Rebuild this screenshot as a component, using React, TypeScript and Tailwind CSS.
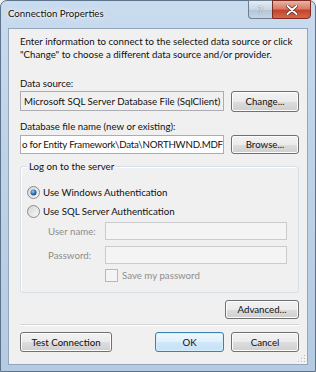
import React from "react";

const btn =
  "flex items-center justify-center whitespace-nowrap rounded-[3px] border border-[#707070] bg-[linear-gradient(#f2f2f2_0%,#ebebeb_50%,#dddddd_51%,#cfcfcf_100%)] shadow-[inset_0_0_0_1px_#fcfcfc] text-[#111]";

function Button({ label, className }: { label: string; className: string }) {
  return <div className={`${btn} ${className}`}>{label}</div>;
}

function Radio({ checked }: { checked?: boolean }) {
  return (
    <svg width="13" height="13" viewBox="0 0 13 13" className="shrink-0">
      <defs>
        <linearGradient id={checked ? "rg1" : "rg0"} x1="0" y1="0" x2="1" y2="1">
          <stop offset="0" stopColor="#cfcfcf" />
          <stop offset="1" stopColor="#ffffff" />
        </linearGradient>
        <radialGradient id="dot" cx="0.4" cy="0.35" r="0.7">
          <stop offset="0" stopColor="#8ad0f4" />
          <stop offset="0.6" stopColor="#2a6fb0" />
          <stop offset="1" stopColor="#14406e" />
        </radialGradient>
      </defs>
      <circle cx="6.5" cy="6.5" r="6" fill={`url(#${checked ? "rg1" : "rg0"})`} stroke="#8a8a8a" strokeWidth="1" />
      <circle cx="6.5" cy="6.5" r="4.3" fill="none" stroke="#e6e6e6" strokeWidth="0.8" />
      {checked && <circle cx="6.5" cy="6.5" r="3" fill="url(#dot)" />}
    </svg>
  );
}

export default function App() {
  return (
    <div className="w-[316px] h-[372px] overflow-hidden bg-[#f0f0f0] font-['Lato',sans-serif] text-[9.7px] leading-[13px] whitespace-nowrap">
      <div className="relative w-[316px] h-[372px] flex flex-col rounded-t-[7px] border border-[#5d738c] bg-[linear-gradient(180deg,#c9dbee_0%,#bfd3e8_40%,#b5cbe2_100%)]">
        {/* title bar */}
        <div className="h-[27px] shrink-0 flex items-start justify-between">
          <div className="pl-[7px] pt-[6px] leading-[13px] text-[#111] [text-shadow:0_0_6px_#fff,0_0_3px_#fff]">
            Connection Properties
          </div>
          <div className="flex mr-[4px] -mt-[1px]">
            <div className="w-[24px] h-[19px] flex items-center justify-center rounded-bl-[4px] border border-[#6f7f92] border-r-0 bg-[linear-gradient(#e5edf6_0%,#c7d5e4_50%,#b3c4d8_51%,#c5d5e6_100%)] text-[11px] font-bold text-[#eef3f8] [text-shadow:0_0_1px_#334]">
              ?
            </div>
            <div className="w-[39px] h-[19px] flex items-center justify-center rounded-br-[4px] border border-[#7b2b20] bg-[linear-gradient(#eab3a6_0%,#d97c68_45%,#c5432c_55%,#d5674b_100%)]">
              <svg width="12" height="10" viewBox="0 0 12 10">
                <path d="M1.5 1 L10.5 9 M10.5 1 L1.5 9" stroke="#3a1a14" strokeWidth="3.2" strokeLinecap="round" />
                <path d="M1.5 1 L10.5 9 M10.5 1 L1.5 9" stroke="#ffffff" strokeWidth="2" strokeLinecap="round" />
              </svg>
            </div>
          </div>
        </div>

        {/* client area */}
        <div className="relative mx-[7px] h-[337px] shrink-0 border border-[#93a6bc] bg-[#f0f0f0] pl-[11px] pr-[8px] pt-[6px] text-[#111]">
          <div>
            <div>Enter information to connect to the selected data source or click</div>
            <div>"Change" to choose a different data source and/or provider.</div>
          </div>

          <div className="mt-[16px]">Data source:</div>
          <div className="flex items-start gap-[7px] mt-[1px]">
            <div className="w-[204px] h-[20px] border border-[#abadb3] bg-[#f0f0f0] pl-[3px] leading-[18px] overflow-hidden">
              Microsoft SQL Server Database File (SqlClient)
            </div>
            <Button label="Change..." className="w-[68px] h-[21px]" />
          </div>

          <div className="mt-[8px]">Database file name (new or existing):</div>
          <div className="flex items-start gap-[7px] mt-[2px]">
            <div className="w-[204px] h-[19px] border border-[#abadb3] bg-white pl-[1px] leading-[17px] overflow-hidden flex">
              <span className="tracking-[-0.2px]">o for Entity Framework\Data\NORTHWND.MDF</span>
              <span className="w-[1px] h-[14px] mt-[2px] bg-black shrink-0" />
            </div>
            <Button label="Browse..." className="w-[68px] h-[19px]" />
          </div>

          {/* group box */}
          <div className="relative mt-[12px] h-[127px] rounded-[3px] border border-[#d5dfe5] shadow-[inset_1px_1px_0_#fff] pl-[6px] pr-[11px] pt-[17px]">
            <span className="absolute left-[6px] -top-[7px] px-[2px] bg-[#f0f0f0]">
              Log on to the server
            </span>
            <div className="flex items-center gap-[3px] h-[16px]">
              <Radio checked />
              <span>Use Windows Authentication</span>
            </div>
            <div className="flex items-center gap-[3px] h-[16px] mt-[3px]">
              <Radio />
              <span>Use SQL Server Authentication</span>
            </div>
            <div className="flex items-center mt-[3px] text-[#8d8d8d]">
              <span className="w-[78px] shrink-0 pl-[21px]">User name:</span>
              <div className="flex-1 h-[18px] border border-[#c9cccf] bg-[#f4f4f4]" />
            </div>
            <div className="flex items-center mt-[6px] text-[#8d8d8d]">
              <span className="w-[78px] shrink-0 pl-[21px]">Password:</span>
              <div className="flex-1 h-[18px] border border-[#c9cccf] bg-[#f4f4f4]" />
            </div>
            <div className="flex items-center mt-[5px] pl-[78px] gap-[4px] text-[#8d8d8d]">
              <div className="w-[13px] h-[13px] border border-[#b8b8b8] bg-[#f4f4f4]" />
              <span>Save my password</span>
            </div>
          </div>

          <div className="flex justify-end mt-[7px]">
            <Button label="Advanced..." className="w-[74px] h-[19px]" />
          </div>

          <div className="mt-[5px] h-[2px] border-t border-[#d5d5d5] border-b border-b-white" />

          <div className="flex items-start mt-[6px]">
            <Button label="Test Connection" className="w-[92px] h-[20px]" />
            <div className="flex-1" />
            <div className="flex items-center justify-center w-[69px] h-[20px] rounded-[3px] border border-[#3c7fb1] bg-[linear-gradient(#eef7fd_0%,#e0f0fb_50%,#cfe7f8_51%,#c4e2f7_100%)] shadow-[inset_0_0_0_1px_#d6eefc]">
              OK
            </div>
            <div className="w-[7px]" />
            <Button label="Cancel" className="w-[68px] h-[20px]" />
          </div>

          {/* size grip */}
          <svg className="absolute right-[1px] bottom-[1px]" width="10" height="10" viewBox="0 0 10 10">
            {[
              [8, 2], [8, 5], [5, 5], [8, 8], [5, 8], [2, 8],
            ].map(([x, y], i) => (
              <g key={i}>
                <rect x={x} y={y} width="1" height="1" fill="#b5b5b5" />
                <rect x={x + 1} y={y + 1} width="1" height="1" fill="#ffffff" />
              </g>
            ))}
          </svg>
        </div>
      </div>
    </div>
  );
}
